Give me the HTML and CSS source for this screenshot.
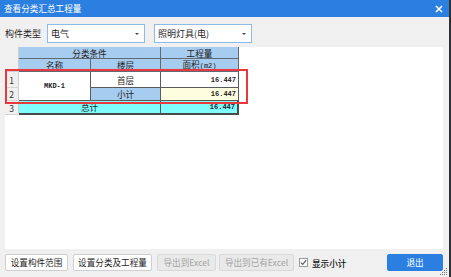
FILE: index.html
```html
<!DOCTYPE html>
<html lang="zh">
<head>
<meta charset="utf-8">
<title>查看分类汇总工程量</title>
<link rel="stylesheet" href="styles.css">
</head>
<body>
<div class="window">
  <div class="titlebar">
    <span class="title">查看分类汇总工程量</span>
    <svg class="close" width="8" height="8" viewBox="0 0 8 8"><path d="M1 1L7 7M7 1L1 7" stroke="#fff" stroke-width="1.6"/></svg>
  </div>
  <div class="toolbar">
    <span class="label">构件类型</span>
    <div class="combo c1"><span>电气</span><i class="arrow"></i></div>
    <div class="combo c2"><span>照明灯具(电)</span><i class="arrow"></i></div>
  </div>
  <div class="grid">
    <table class="sheet">
      <colgroup><col class="w-rh"><col class="w-name"><col class="w-floor"><col class="w-qty"></colgroup>
      <tr class="h1">
        <td class="rh corner" rowspan="2"></td>
        <td class="hd" colspan="2">分类条件</td>
        <td class="hd">工程量</td>
      </tr>
      <tr class="h2">
        <td class="hd">名称</td>
        <td class="hd">楼层</td>
        <td class="hd">面积<span class="mono">(m2)</span></td>
      </tr>
      <tr class="r1">
        <td class="rh">1</td>
        <td class="cell name mono" rowspan="2">MKD-1</td>
        <td class="cell ctr">首层</td>
        <td class="cell num mono">16.447</td>
      </tr>
      <tr class="r2">
        <td class="rh">2</td>
        <td class="cell ctr sub">小计</td>
        <td class="cell num mono yel">16.447</td>
      </tr>
      <tr class="r3">
        <td class="rh">3</td>
        <td class="cell ctr tot" colspan="2">总计</td>
        <td class="cell num mono tot">16.447</td>
      </tr>
    </table>
    <div class="highlight"></div>
  </div>
  <div class="footer">
    <button class="btn b1">设置构件范围</button>
    <button class="btn b2">设置分类及工程量</button>
    <button class="btn b3 dis">导出到Excel</button>
    <button class="btn b4 dis">导出到已有Excel</button>
    <label class="chk"><span class="box"><svg width="7" height="7" viewBox="0 0 7 7"><path d="M0.8 3.6L2.7 5.4L6.2 1.2" fill="none" stroke="#555" stroke-width="1.1"/></svg></span>显示小计</label>
    <button class="btn quit">退出</button>
  </div>
  <svg class="grip" width="8" height="8" viewBox="0 0 8 8">
    <rect x="6" y="0" width="1" height="1" fill="#777"/>
    <rect x="4" y="2" width="1" height="1" fill="#777"/>
    <rect x="6" y="2" width="1" height="1" fill="#777"/>
    <rect x="2" y="4" width="1" height="1" fill="#777"/>
    <rect x="4" y="4" width="1" height="1" fill="#777"/>
    <rect x="6" y="4" width="1" height="1" fill="#777"/>
    <rect x="0" y="6" width="1" height="1" fill="#777"/>
    <rect x="2" y="6" width="1" height="1" fill="#777"/>
    <rect x="4" y="6" width="1" height="1" fill="#777"/>
    <rect x="6" y="6" width="1" height="1" fill="#777"/>
  </svg>
</div>
</body>
</html>
```
FILE: styles.css
```css
html, body {
  margin: 0;
  padding: 0;
  background: #2e3035;
}
body {
  width: 451px;
  height: 277px;
  overflow: hidden;
  font-family: "Noto Sans CJK SC", "Microsoft YaHei", sans-serif;
  font-size: 9px;
  color: #1e1e1e;
}
.window {
  position: relative;
  width: 449px;
  height: 277px;
  background: #f0f0f0;
  display: flex;
  flex-direction: column;
}
.titlebar {
  height: 17px;
  background: #2b7fe0;
  color: #fff;
  display: flex;
  align-items: center;
  justify-content: space-between;
  padding: 0 6px 0 4px;
  flex: none;
}
.title {
  font-size: 8.6px;
  line-height: 17px;
}
.close {
  display: block;
}
.toolbar {
  flex: none;
  height: 19px;
  margin-top: 7px;
  padding-left: 5px;
  display: flex;
  align-items: center;
}
.label {
  width: 42px;
  line-height: 19px;
}
.combo {
  box-sizing: border-box;
  height: 19px;
  width: 98px;
  background: #fff;
  border: 1px solid #8cbaea;
  display: flex;
  align-items: center;
  justify-content: space-between;
  padding: 0 5px 0 3px;
}
.c2 {
  margin-left: 9px;
}
.arrow {
  width: 0;
  height: 0;
  border-left: 2px solid transparent;
  border-right: 2px solid transparent;
  border-top: 2px solid #444;
}
.grid {
  position: relative;
  flex: none;
  margin: 4px 6px 0 5px;
  height: 202px;
  background: #fff;
}
.sheet {
  border-collapse: separate;
  border-spacing: 0;
  table-layout: fixed;
  width: 234px;
}
.w-rh { width: 14px; }
.w-name { width: 72px; }
.w-floor { width: 70px; }
.w-qty { width: 78px; }
.sheet td {
  padding: 0;
  box-sizing: border-box;
  line-height: 10px;
  white-space: nowrap;
  overflow: hidden;
  vertical-align: middle;
}
.h1 { height: 12px; }
.h2 { height: 11px; }
.r1 { height: 16px; }
.r2 { height: 13px; }
.r3 { height: 14px; }
.rh {
  background: #f0f0f0;
  border-right: 1px solid #cfcfcf;
  border-bottom: 1px solid #d6d6d6;
  text-align: center;
  color: #333;
  font-size: 8.5px;
}
.corner {
  border-bottom: 1px solid #cfcfcf;
}
.hd {
  background: #a6ccef;
  border-right: 1px solid #5f6a75;
  border-bottom: 1px solid #5f6a75;
  text-align: center;
  font-size: 8.6px;
}
.cell {
  border-right: 1px solid #5a5a5a;
  border-bottom: 1px solid #5a5a5a;
  background: #fff;
}
.mono {
  font-family: "Liberation Mono", "DejaVu Sans Mono", monospace;
  font-size: 7px;
  font-weight: bold;
  color: #222;
}
.hd .mono {
  font-weight: normal;
}
.name {
  text-align: center;
}
.ctr {
  text-align: center;
  font-size: 8.6px;
}
.num {
  text-align: right;
  padding-right: 2px !important;
}
.sub {
  background: #a6ccef;
}
.yel {
  background: #fffde0;
}
.tot {
  background: #7ffdfc;
  border-bottom: 2px solid #4a4a4a;
}
.r3 .num {
  border-right: 2px solid #4a4a4a;
}
.highlight {
  position: absolute;
  left: 0;
  top: 22px;
  width: 243px;
  height: 35px;
  box-sizing: border-box;
  border: 2px solid #e9383e;
}
.footer {
  flex: none;
  height: 17px;
  margin-top: 5px;
  padding: 0 6px 0 5px;
  display: flex;
  align-items: center;
}
.btn {
  box-sizing: border-box;
  height: 17px;
  padding: 0;
  margin: 0;
  font-family: inherit;
  font-size: 8.6px;
  color: #1e1e1e;
  background: #fff;
  border: 1px solid #cfcfcf;
  border-radius: 2px;
  line-height: 15px;
}
.b1 { width: 63px; }
.b2 { width: 79px; margin-left: 5px; }
.b3 { width: 59px; margin-left: 5px; }
.b4 { width: 75px; margin-left: 3px; }
.dis {
  background: #e9e9e9;
  border-color: #d9d9d9;
  color: #a3a3a3;
}
.chk {
  display: flex;
  align-items: center;
  margin-left: 5px;
  font-size: 8.6px;
  font-weight: 500;
  color: #111;
}
.box {
  box-sizing: border-box;
  width: 9px;
  height: 9px;
  background: #fff;
  border: 1px solid #9a9a9a;
  margin-right: 4px;
  display: flex;
  align-items: center;
  justify-content: center;
}
.box svg {
  display: block;
}
.quit {
  margin-left: auto;
  width: 56px;
  background: #2b7fe0;
  border-color: #2b7fe0;
  color: #fff;
}
.grip {
  position: absolute;
  right: 1px;
  bottom: 1px;
}
```
